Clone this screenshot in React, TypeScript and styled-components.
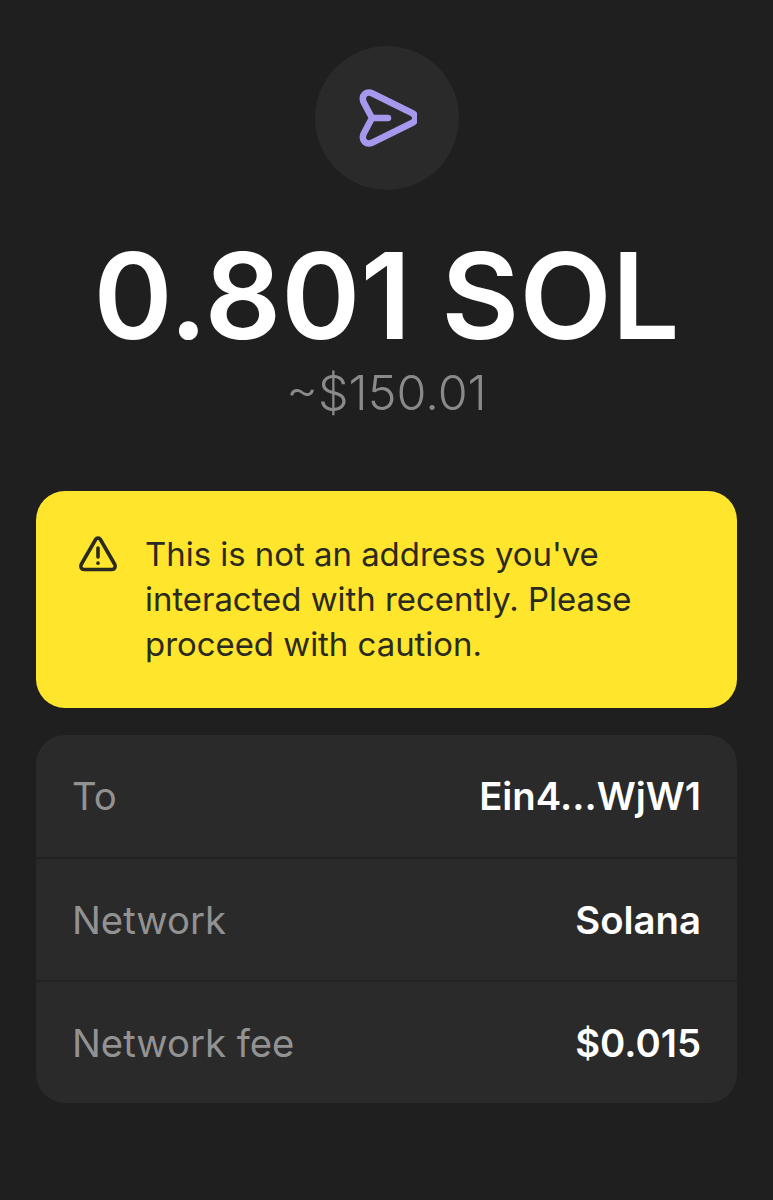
import React from 'react'
import styled, { createGlobalStyle } from 'styled-components'

const GlobalStyle = createGlobalStyle`
  html, body {
    margin: 0;
    padding: 0;
    background: #1f1f1f;
  }
  body {
    font-family: Inter, "Liberation Sans", sans-serif;
  }
`

const Page = styled.div`
  width: 773px;
  height: 1200px;
  overflow: hidden;
  box-sizing: border-box;
  padding: 46px 36px 0;
  display: flex;
  flex-direction: column;
  align-items: center;
`

const IconCircle = styled.div`
  width: 144px;
  height: 144px;
  border-radius: 50%;
  background: #2a2a2a;
  display: flex;
  align-items: center;
  justify-content: center;
`

const Amount = styled.h1`
  margin: 40px 0 0;
  font-size: 120px;
  line-height: 132px;
  font-weight: 600;
  color: #ffffff;
  white-space: nowrap;
`

const Fiat = styled.div`
  margin-top: 4px;
  font-size: 48.5px;
  line-height: 54px;
  font-weight: 300;
  color: #8a8a8a;
`

const Warning = styled.div`
  margin-top: 71px;
  width: 100%;
  height: 217px;
  box-sizing: border-box;
  padding: 41px 30px 0 42px;
  border-radius: 29px;
  background: #ffe52b;
  display: flex;
  gap: 27px;
  color: #2a2a1e;
`

const WarningIcon = styled.svg`
  flex: none;
  width: 40px;
  height: 40px;
  margin-top: 2px;
`

const WarningText = styled.p`
  margin: 0;
  font-size: 32.9px;
  line-height: 45px;
`

const Details = styled.div`
  margin-top: 27px;
  width: 100%;
  border-radius: 29px;
  background: #2a2a2a;
  overflow: hidden;
`

const Row = styled.div`
  height: 122px;
  box-sizing: border-box;
  padding: 0 36px 0 36px;
  display: flex;
  align-items: center;
  justify-content: space-between;
  font-size: 38.3px;

  & + & {
    border-top: 2px solid #222222;
    height: 123px;
  }
`

const Label = styled.span`
  color: #929292;
`

const Value = styled.span`
  color: #ffffff;
  font-weight: 600;
`

const rows = [
  { label: 'To', value: 'Ein4...WjW1' },
  { label: 'Network', value: 'Solana' },
  { label: 'Network fee', value: '$0.015' },
]

export default function App() {
  return (
    <Page>
      <GlobalStyle />
      <IconCircle>
        <svg width="60" height="58" viewBox="0 0 60 58" fill="none">
          <path
            d="M6.5 13 C4 6 9.5 1.5 15.5 4.5 L55 24 C59.5 26.2 59.5 31.8 55 34 L15.5 53.5 C9.5 56.5 4 52 6.5 45 L15 29 Z M15 29 L31 29"
            stroke="#a698ec"
            strokeWidth="6.5"
            strokeLinecap="round"
            strokeLinejoin="round"
          />
        </svg>
      </IconCircle>
      <Amount>0.801 SOL</Amount>
      <Fiat>~$150.01</Fiat>
      <Warning>
        <WarningIcon viewBox="0 0 40 40" fill="none" stroke="#2a2a1e" strokeWidth="3.6" strokeLinecap="round" strokeLinejoin="round">
          <path d="M17.6 5.5 L3.2 30.5 C2 32.8 3.4 35.5 6 35.5 L34 35.5 C36.6 35.5 38 32.8 36.8 30.5 L22.4 5.5 C21.2 3.5 18.8 3.5 17.6 5.5 Z" />
          <path d="M20 14 L20 23" />
          <path d="M20 29 L20 29.2" />
        </WarningIcon>
        <WarningText>
          This is not an address you've interacted with recently. Please proceed with caution.
        </WarningText>
      </Warning>
      <Details>
        {rows.map((row) => (
          <Row key={row.label}>
            <Label>{row.label}</Label>
            <Value>{row.value}</Value>
          </Row>
        ))}
      </Details>
    </Page>
  )
}
